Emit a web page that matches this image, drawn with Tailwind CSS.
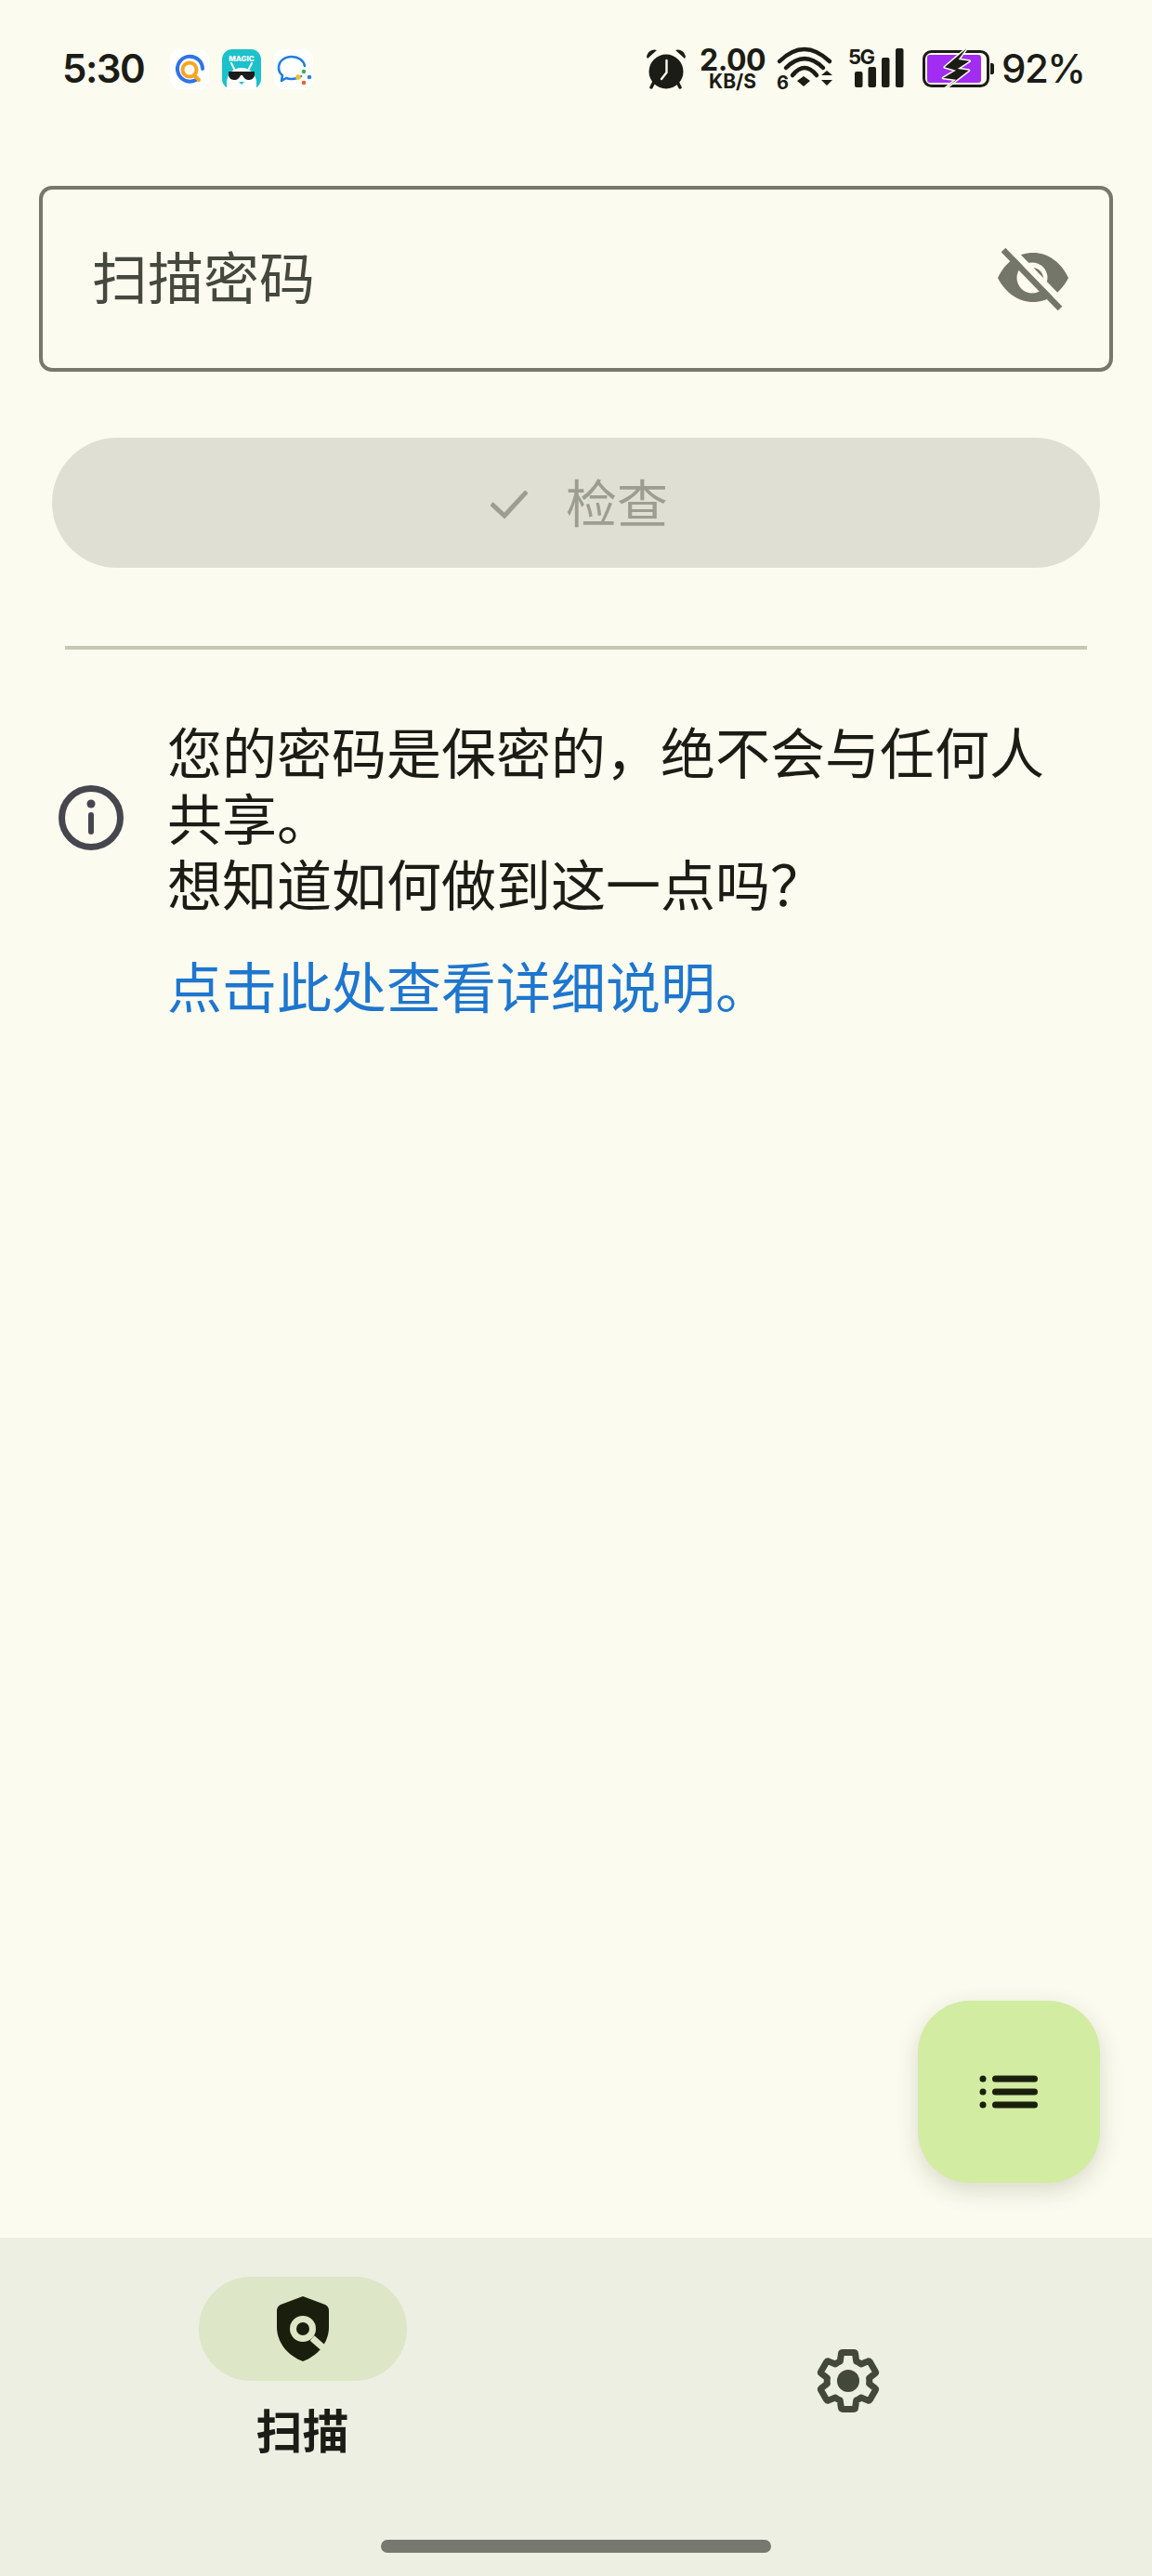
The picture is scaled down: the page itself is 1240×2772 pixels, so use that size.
<!DOCTYPE html>
<html lang="zh-CN">
<head>
  <meta charset="UTF-8" />
  <meta name="viewport" content="width=device-width,initial-scale=1.0" />
  <title>扫描密码</title>
  <script src="https://cdn.jsdelivr.net/npm/@tailwindcss/browser@4"></script>
</head>
<body class="bg-[#fbfbef] font-['Inter','Noto_Sans_CJK_SC',sans-serif] text-[#1b1c15]">
<div class="relative w-[1240px] h-[2772px] flex flex-col overflow-hidden">

  <!-- Status bar -->
  <div class="h-[148px] flex items-center justify-between pl-[67px] pr-[75px] shrink-0">
    <div class="flex items-center">
      <span class="w-[87px] text-[42px] leading-none font-semibold tracking-[-1.5px]">5:30</span>
      <div class="flex items-center gap-[14px] ml-[29px]">
        <svg class="w-[42px] h-[43px]" viewBox="0 0 42 43">
          <rect width="42" height="43" rx="11" fill="#fff"/>
          <path d="M28 33A13.5 13.5 0 1 1 35 21" fill="none" stroke="#2f73e8" stroke-width="4" stroke-linecap="round"/>
          <circle cx="21" cy="22" r="7.5" fill="none" stroke="#f5a623" stroke-width="4"/>
          <path d="M26 28l5 5" stroke="#f5a623" stroke-width="4" stroke-linecap="round"/>
        </svg>
        <svg class="w-[42px] h-[43px]" viewBox="0 0 42 43">
          <rect width="42" height="43" rx="11" fill="#1cc1cb"/>
          <text x="21" y="13" text-anchor="middle" font-family="Inter" font-weight="800" font-size="8" fill="#fff">MAGIC</text>
          <path d="M5 43V36C5 27 12 20 21 20S37 27 37 36V43Z" fill="#fff"/>
          <path d="M10 15l3 6M32 15l-3 6" stroke="#fff" stroke-width="2" stroke-linecap="round"/>
          <path d="M7 24H35V27C35 32 31 33 28 33 25 33 23 30 22 28H20C19 30 17 33 14 33 11 33 7 32 7 27Z" fill="#1b1b1b"/>
          <path d="M18 35H24L21 38Z" fill="#1cc1cb"/>
        </svg>
        <svg class="w-[42px] h-[43px]" viewBox="0 0 42 43">
          <rect width="42" height="43" rx="11" fill="#fff"/>
          <path d="M29 29C26 31 23 32 19 32 17 32 15 32 13 31L8 34 9 28C6 26 5 23 5 20 5 13 11 8 19 8 26 8 32 12 33 18" fill="none" stroke="#1f7fe0" stroke-width="2.6" stroke-linecap="round" stroke-linejoin="round"/>
          <circle cx="32" cy="24" r="2.3" fill="#3cae4a"/>
          <circle cx="38" cy="30" r="2.3" fill="#2f80e8"/>
          <circle cx="32" cy="36" r="2.3" fill="#e8622c"/>
          <circle cx="26" cy="30" r="2.8" fill="#f5c02c"/>
        </svg>
      </div>
    </div>
    <div class="flex items-center">
      <svg class="w-[44px] h-[44px]" viewBox="0 0 44 44">
        <path d="M1 9C2 3 8 0 12 2L2 11ZM43 9C42 3 36 0 32 2L42 11Z" fill="#1b1c15"/>
        <path d="M9 36l-3 6M34 36l3 6" stroke="#1b1c15" stroke-width="3.5" stroke-linecap="round"/>
        <circle cx="22" cy="25" r="18.5" fill="#1b1c15"/>
        <path d="M22.5 13V26L17 33" fill="none" stroke="#fbfbef" stroke-width="2.4" stroke-linecap="round" stroke-linejoin="round"/>
      </svg>
      <div class="w-[67px] ml-[16px] pt-[2px] flex flex-col items-center font-bold">
        <span class="text-[32px] leading-[26px] tracking-[-0.5px]">2.00</span>
        <span class="text-[21px] leading-[20px]">KB/S</span>
      </div>
      <svg class="w-[60px] h-[46px] ml-[15px] overflow-visible" viewBox="0 0 60 46" fill="none" stroke="#1b1c15">
        <path d="M2 15Q28.5 -11 56 15" stroke-width="4.5" stroke-linecap="round"/>
        <path d="M9 22Q29 2 49 22" stroke-width="4.5" stroke-linecap="round"/>
        <path d="M16 30Q29 14 42 30" stroke-width="4.5" stroke-linecap="round"/>
        <path d="M21 36L28 31 35 36 28 42Z" fill="#1b1c15" stroke="none"/>
        <path d="M47 30L53 25 59 30ZM47 35H59L53 41Z" fill="#1b1c15" stroke="none"/>
        <text x="-1" y="45" font-family="Inter" font-weight="700" font-size="20" fill="#1b1c15" stroke="none">6</text>
      </svg>
      <svg class="w-[60px] h-[44px] ml-[16px] overflow-visible" viewBox="0 0 60 44">
        <text x="0" y="17" font-family="Inter" font-weight="700" font-size="22" letter-spacing="-1.5" fill="#1b1c15">5G</text>
        <rect x="7" y="25" width="8.5" height="17" rx="2" fill="#1b1c15"/>
        <rect x="21.500" y="20" width="8.5" height="22" rx="2" fill="#1b1c15"/>
        <rect x="36" y="10" width="8.500" height="32" rx="2" fill="#1b1c15"/>
        <rect x="51" y="0" width="8.500" height="42" rx="2" fill="#1b1c15"/>
      </svg>
      <svg class="w-[77px] h-[40px] ml-[20px] overflow-visible" viewBox="0 0 77 40">
        <rect x="1.500" y="1.500" width="69" height="37" rx="8" fill="none" stroke="#1b1c15" stroke-width="3"/>
        <rect x="5" y="5" width="58" height="30" rx="3" fill="#a32cf2"/>
        <path d="M73 14h2c1 0 2 1 2 2v8c0 1-1 2-2 2h-2Z" fill="#1b1c15"/>
        <path d="M47.300 -1.700L23.900 18.300 36 21.700 22.200 30 36 31.700 23.900 41.700 49.800 21.700 37.700 20 50.500 11.700 38.700 10Z" fill="#1b1c15" stroke="#fbfbef" stroke-width="3" paint-order="stroke" stroke-linejoin="round"/>
      </svg>
      <span class="w-[87px] ml-[8px] text-[42px] leading-none font-medium tracking-[-1.5px]">92%</span>
    </div>
  </div>

  <!-- Password field -->
  <div class="mt-[52px] mx-[42px] h-[200px] shrink-0 border-[4px] border-[#75786a] rounded-[14px] flex items-center justify-between pl-[53px] pr-[42px]">
    <span class="text-[60px] leading-none text-[#45483c]">扫描密码</span>
    <svg class="w-[78px] h-[62px] overflow-visible" viewBox="0 0 78 62">
      <path d="M0 30C8 13 22 3 38 3S68 13 76 30C68 46 54 56 38 56S8 46 0 30Z" fill="#74766a"/>
      <circle cx="37" cy="30" r="16.500" fill="#fbfbef"/>
      <path d="M38 19A12 12 0 0 1 49 32Z" fill="#74766a"/>
      <path d="M6 0L67 63" stroke="#fbfbef" stroke-width="7" transform="translate(4.6 -4.6)"/>
      <path d="M6 0L67 63" stroke="#74766a" stroke-width="6.500"/>
    </svg>
  </div>

  <!-- Check button -->
  <div class="mt-[71px] mx-[56px] h-[140px] shrink-0 rounded-full bg-[#dfdfd4] flex items-center justify-center gap-[41px] pl-[7px] pt-[3px] text-[#9c9e92]">
    <svg class="w-[40px] h-[30px]" viewBox="0 0 40 30" fill="none">
      <path d="M1 14L15 27 39 1" stroke="#9c9e92" stroke-width="5"/>
    </svg>
    <span class="text-[55px] leading-none">检查</span>
  </div>

  <!-- Divider -->
  <div class="mt-[84px] mx-[70px] h-[4px] shrink-0 bg-[#c6c8b6]"></div>

  <!-- Info text -->
  <div class="mt-[77px] pl-[63px] pr-[60px] flex items-center shrink-0">
    <svg class="w-[70px] h-[70px] shrink-0 mb-[6px]" viewBox="0 0 70 70">
      <circle cx="35" cy="35" r="31.500" fill="none" stroke="#46464f" stroke-width="7"/>
      <circle cx="35" cy="20" r="4.500" fill="#46464f"/>
      <rect x="32" y="29" width="6" height="24" rx="3" fill="#46464f"/>
    </svg>
    <p class="ml-[47px] text-[59px] leading-[71px]">您的密码是保密的，绝不会与任何人共享。<br />想知道如何做到这一点吗？</p>
  </div>
  <a class="mt-[39px] ml-[180px] text-[59px] leading-[71px] text-[#1e76cf] shrink-0">点击此处查看详细说明。</a>

  <div class="flex-1"></div>

  <!-- List FAB -->
  <div class="absolute left-[988px] top-[2153px] w-[196px] h-[196px] rounded-[56px] bg-[#d2eca2] shadow-[0_8px_24px_rgba(40,45,20,0.16)] flex items-center justify-center">
    <svg class="w-[66px] h-[36px]" viewBox="0 0 66 36" fill="#1a1f0d">
      <circle cx="5" cy="4" r="3.500"/><rect x="15" y="0.500" width="49" height="7" rx="3.500"/>
      <circle cx="5" cy="18" r="3.500"/><rect x="15" y="14.500" width="49" height="7" rx="3.500"/>
      <circle cx="5" cy="32" r="3.500"/><rect x="15" y="28.500" width="49" height="7" rx="3.500"/>
    </svg>
  </div>

  <!-- Bottom nav -->
  <nav class="relative h-[364px] shrink-0 bg-[#ecefe2] grid grid-cols-2 px-[31px]">
    <div class="flex flex-col items-center pt-[42px]">
      <div class="w-[224px] h-[112px] rounded-full bg-[#dde6c6] flex items-center justify-center">
        <svg class="w-[56px] h-[70px]" viewBox="0 0 56 70">
          <path d="M28 0L52 9C54 10 56 12 56 15V33C56 50 44 64 28 70 12 64 0 50 0 33V15C0 12 2 10 4 9Z" fill="#1a1f0d"/>
          <path d="M38 45L54 59" stroke="#dde6c6" stroke-width="7"/>
          <circle cx="28" cy="35" r="10.500" fill="#1a1f0d" stroke="#dde6c6" stroke-width="7"/>
        </svg>
      </div>
      <span class="mt-[26px] text-[50px] leading-[58px] font-bold">扫描</span>
    </div>
    <div class="flex items-center justify-center pb-[56px] pr-[3px]">
      <svg class="w-[76px] h-[76px]" viewBox="0 0 24 24">
        <path d="M19.14 12.94c.04-.3.06-.61.06-.94 0-.32-.02-.64-.07-.94l2.03-1.58c.18-.14.23-.41.12-.61l-1.92-3.32c-.12-.22-.37-.29-.59-.22l-2.39.96c-.5-.38-1.03-.7-1.62-.94l-.36-2.54c-.04-.24-.24-.41-.48-.41h-3.84c-.24 0-.43.17-.47.41l-.36 2.54c-.59.24-1.13.57-1.62.94l-2.39-.96c-.22-.08-.47 0-.59.22L2.74 8.87c-.12.21-.08.47.12.61l2.03 1.58c-.05.3-.09.63-.09.94s.02.64.07.94l-2.03 1.58c-.18.14-.23.41-.12.61l1.92 3.32c.12.22.37.29.59.22l2.39-.96c.5.38 1.03.7 1.62.94l.36 2.54c.05.24.24.41.48.41h3.84c.24 0 .44-.17.47-.41l.36-2.54c.59-.24 1.13-.56 1.62-.94l2.39.96c.22.08.47 0 .59-.22l1.92-3.32c.12-.22.07-.47-.12-.61l-2.01-1.58z" fill="none" stroke="#44483b" stroke-width="2.200" stroke-linejoin="round"/>
        <circle cx="12" cy="12" r="3.800" fill="#44483b"/>
      </svg>
    </div>
    <div class="absolute left-[410px] bottom-[25px] w-[420px] h-[14px] rounded-full bg-[#777870]"></div>
  </nav>
</div>
</body>
</html>
